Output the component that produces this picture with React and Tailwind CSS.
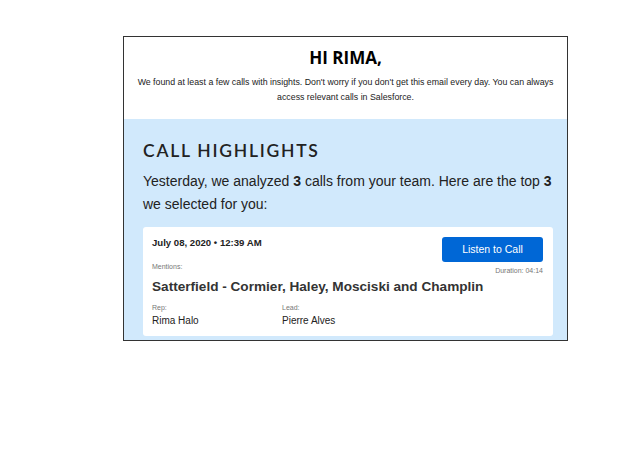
export default function App() {
    return (
        <div className="min-h-[460px] w-full bg-white pt-[36px] pl-[123px]">
            <div className="w-[445px] border border-[#333333] bg-white">
                <div className="px-[6px] pt-[9px] pb-[14px] text-center">
                    <h1 className="text-[17px] leading-[24px] font-bold text-black" style={{ fontFamily: '"Open Sans", sans-serif' }}>
                        HI RIMA,
                    </h1>
                    <p className="mt-[5px] text-[8.8px] leading-[15px] text-[#222]" style={{ fontFamily: '"Liberation Sans", Arial, sans-serif' }}>
                        We found at least a few calls with insights. Don't worry if you don't get this email every day. You can always access relevant calls in Salesforce.
                    </p>
                </div>
                <div className="bg-[#d1e9fc] pl-[19px] pr-[14px] pt-[20px] pb-[4px]" style={{ fontFamily: '"Liberation Sans", Arial, sans-serif' }}>
                    <h2 className="text-[17.5px] leading-[24px] font-semibold tracking-[0.1em] text-[#222]" style={{ fontFamily: 'Lato, sans-serif' }}>
                        CALL HIGHLIGHTS
                    </h2>
                    <p className="mt-[7px] text-[14px] leading-[23px] text-[#222]">
                        Yesterday, we analyzed <b>3</b> calls from your team. Here are the top <b>3</b> we selected for you:
                    </p>
                    <div className="mt-[11px] rounded-[3px] bg-white pl-[9px] pr-[10px] pt-[10px] pb-[9px] text-[#222]">
                        <div className="flex items-start justify-between">
                            <div className="text-[9.6px] leading-[12px] font-bold">July 08, 2020 • 12:39 AM</div>
                            <button className="h-[25px] w-[101px] rounded-[3px] bg-[#0067d6] text-[10.5px] text-white">
                                Listen to Call
                            </button>
                        </div>
                        <div className="flex items-start justify-between">
                            <div className="text-[7px] leading-[10px] text-[#777]">Mentions:</div>
                            <div className="mt-[4px] text-[7px] leading-[10px] text-[#777]">Duration: 04:14</div>
                        </div>
                        <div className="mt-[2px] text-[13.6px] leading-[18px] font-bold text-[#333]">
                            Satterfield - Cormier, Haley, Mosciski and Champlin
                        </div>
                        <div className="mt-[7px] flex">
                            <div className="w-[130px]">
                                <div className="text-[7px] leading-[10px] text-[#777]">Rep:</div>
                                <div className="mt-[1px] text-[10px] leading-[13px]">Rima Halo</div>
                            </div>
                            <div>
                                <div className="text-[7px] leading-[10px] text-[#777]">Lead:</div>
                                <div className="mt-[1px] text-[10px] leading-[13px]">Pierre Alves</div>
                            </div>
                        </div>
                    </div>
                </div>
            </div>
        </div>
    )
}
